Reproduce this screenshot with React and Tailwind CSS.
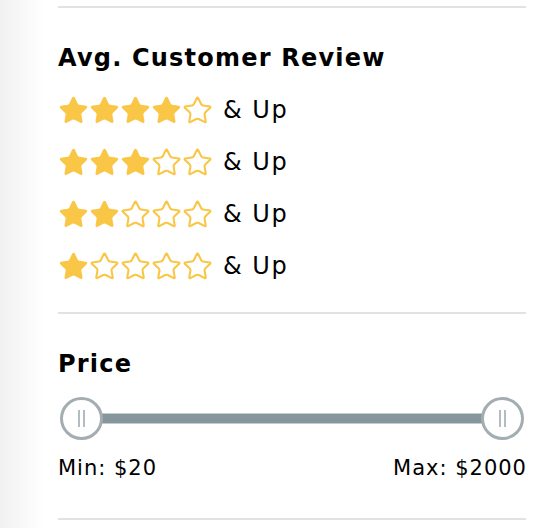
const STAR =
  'M11.525 2.295a.53.53 0 0 1 .95 0l2.31 4.679a2.123 2.123 0 0 0 1.595 1.16l5.166.756a.53.53 0 0 1 .294.904l-3.736 3.638a2.123 2.123 0 0 0-.611 1.878l.882 5.14a.53.53 0 0 1-.771.56l-4.618-2.428a2.122 2.122 0 0 0-1.973 0L6.396 21.01a.53.53 0 0 1-.77-.56l.881-5.139a2.122 2.122 0 0 0-.611-1.879L2.16 9.795a.53.53 0 0 1 .294-.906l5.165-.755a2.122 2.122 0 0 0 1.597-1.16z';

function Star({ filled }) {
  return (
    <svg viewBox="0 0 24 24" className="w-[31px] h-[31px]">
      <path
        d={STAR}
        fill={filled ? '#f9c646' : '#ffffff'}
        stroke="#f9c646"
        strokeWidth={filled ? 1.2 : 1.6}
        strokeLinejoin="round"
      />
    </svg>
  );
}

function Thumb() {
  return (
    <div className="w-[43px] h-[43px] rounded-full bg-white border-[3px] border-[#a3adb2] flex items-center justify-center gap-[3px] shrink-0 z-10">
      <span className="w-[2px] h-[17px] bg-[#b3bcc0]" />
      <span className="w-[2px] h-[17px] bg-[#b3bcc0]" />
    </div>
  );
}

export default function App() {
  const ratings = [4, 3, 2, 1];
  return (
    <div
      className="flex w-[550px] h-[528px] bg-white text-black overflow-hidden"
      style={{ fontFamily: '"DejaVu Sans", "Liberation Sans", sans-serif' }}
    >
      <div className="w-[43px] shrink-0 bg-gradient-to-r from-[#f1f1f1] to-white" />
      <div className="flex-1 pl-[15px] pr-[24px] pt-[6px]">
        <div className="h-[2px] bg-[#dfe3e6]" />

        <h2 className="mt-[34px] text-[24px] leading-[32px] font-bold tracking-[1.2px]">
          Avg. Customer Review
        </h2>

        <div className="mt-[10px] flex flex-col">
          {ratings.map((r) => (
            <div key={r} className="h-[52px] flex items-center">
              <div className="flex">
                {[1, 2, 3, 4, 5].map((i) => (
                  <Star key={i} filled={i <= r} />
                ))}
              </div>
              <span className="ml-[10px] text-[24px] leading-[32px] tracking-[1.5px]">&amp; Up</span>
            </div>
          ))}
        </div>

        <div className="mt-[20px] h-[2px] bg-[#dfe3e6]" />

        <h2 className="mt-[34px] text-[24px] leading-[32px] font-bold tracking-[1.2px]">Price</h2>

        <div className="mt-[16px] h-[44px] px-[2px] flex items-center">
          <Thumb />
          <div className="flex-1 h-[11px] bg-[#87959c] border border-[#c4ccd0] -mx-[2px]" />
          <Thumb />
        </div>

        <div className="mt-[14px] flex justify-between text-[21px] leading-[28px] tracking-[1px]">
          <span>Min: $20</span>
          <span className="-mr-[1px]">Max: $2000</span>
        </div>

        <div className="mt-[36px] h-[2px] bg-[#dfe3e6]" />
      </div>
    </div>
  );
}
